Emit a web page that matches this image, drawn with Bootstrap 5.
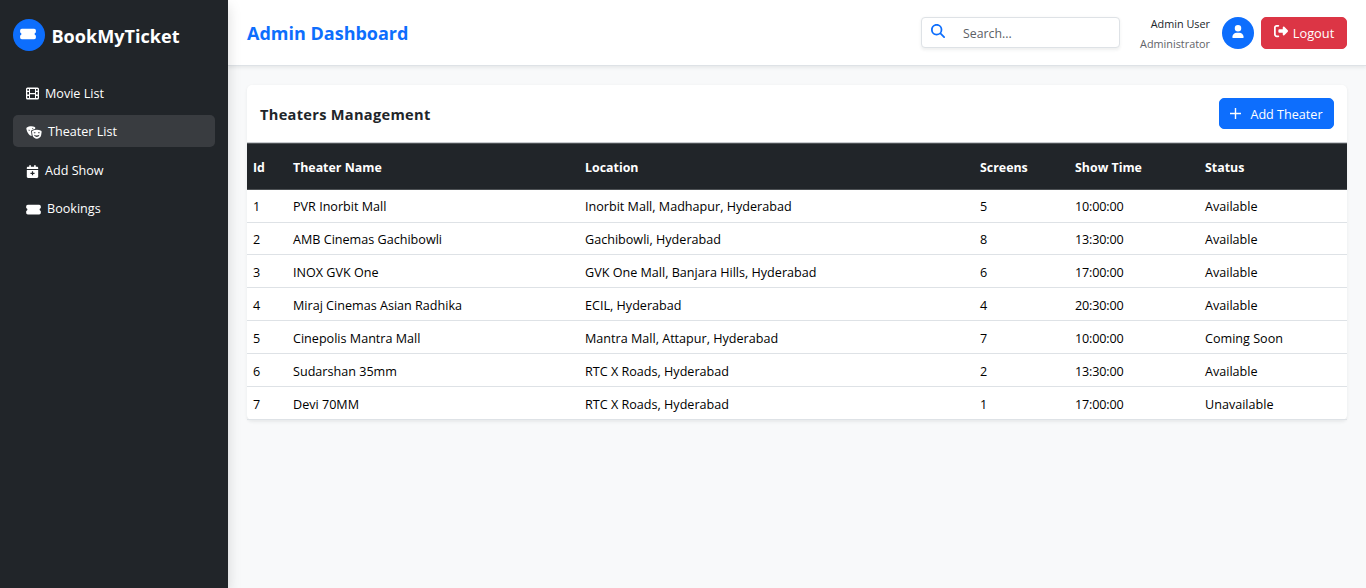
<!DOCTYPE html>
<html lang="en">
<head>
<meta charset="utf-8">
<meta name="viewport" content="width=device-width, initial-scale=1">
<title>Admin Dashboard</title>
<link href="https://cdn.jsdelivr.net/npm/bootstrap@5.3.0/dist/css/bootstrap.min.css" rel="stylesheet">
<style>
html{font-size:12.8px}
body{font-family:"Open Sans","Noto Sans",sans-serif;background:#f8f9fa;height:100vh;overflow:hidden;color:#212529}
svg{fill:currentColor;display:block;flex:none}
.side{width:228px;padding:19px 13px;z-index:3;box-shadow:0 6.4px 12.8px rgba(0,0,0,.15)}
.disc{width:32px;height:32px;border-radius:50%}
.side .disc{padding:0 2px 2px 0}
.brand{font-size:18.1px;line-height:30px;font-weight:700;padding-top:2px}
.side .nav{margin-top:26px;gap:6.3px}
.side .nav-link{height:32px;padding:0 13px;border-radius:5px;color:#fff;gap:6px;font-size:12.6px}
.side .nav-link span{padding-top:3px}
.side .nav-link.active{background:#393c40}
.topbar{height:66px;padding:0 19px;border-bottom:1px solid #dee2e6;z-index:2}
.title{font-size:18px;font-weight:700;line-height:24px}
.search{width:199px;height:31px;border:1px solid #dee2e6;border-radius:4px;padding:0 10px 0 9px;margin-right:20px}
.search svg{margin-bottom:3px}
.search input{border:0;outline:0;width:130px;margin-left:18px;padding:3px 0 0;background:none;font-size:12.3px}
.search input::placeholder{color:#5c6066;opacity:1}
.who{font-size:10.85px;line-height:20px;margin-right:12px;padding-top:2px;color:#212529}
.role{color:#5f6368}
.user-icon{margin-bottom:2px}
.logout{height:32px;width:86px;padding:0;border-radius:5px;margin-left:7px;font-size:12.8px;gap:5px}
.logout span{padding-top:2px}
.add span{padding-top:3px}
.panel{margin:19px;border-radius:5px}
.panel-top{height:58px;padding:0 13px;border-bottom:1px solid #c8cbcf}
.panel-top h2{font-size:14.6px;font-weight:700;margin:2px 0 0;letter-spacing:.3px}
.add{width:115px;height:31px;padding:0;border-radius:5px;font-size:12.6px;gap:9px}
.theaters{table-layout:fixed;font-size:12.6px;border-collapse:separate;border-spacing:0}
.theaters td,.theaters th{padding:1px 6px 0;height:33px;vertical-align:middle;white-space:nowrap;line-height:19px}
.theaters td{border-bottom:1px solid #dee2e6;color:#000}
.theaters td:nth-child(5){letter-spacing:-.15px}
.theaters tbody tr:nth-child(2) td{height:32px;padding-top:2px}
.theaters tbody tr:nth-child(n+3) td{padding-top:3px}
.theaters th{height:47px;padding-top:2px;font-size:12.4px;background:#212529;color:#fff;border-bottom:1px solid #4d5154;border-top:1px solid #4d5154}
</style>
</head>
<body class="d-flex">
<svg class="d-none"><symbol id="ticket" viewBox="0 0 576 512"><path d="M0 128C0 92.7 28.7 64 64 64h448c35.300 0 64 28.700 64 64v64c0 8.800-7.400 15.700-15.700 18.600C541.500 217.100 528 235 528 256s13.500 38.900 32.300 45.400c8.300 2.900 15.700 9.800 15.700 18.600v64c0 35.300-28.700 64-64 64H64c-35.300 0-64-28.700-64-64v-64c0-8.800 7.400-15.700 15.700-18.600C34.500 294.900 48 277 48 256s-13.500-38.900-32.300-45.400C7.400 207.700 0 200.800 0 192z"/></symbol></svg>
<aside class="side bg-dark text-white position-relative flex-shrink-0">
  <div class="d-flex align-items-center">
    <div class="disc bg-primary d-flex align-items-center justify-content-center"><svg width="16" height="14"><use href="#ticket"/></svg></div>
    <span class="brand ms-2">BookMyTicket</span>
  </div>
  <nav class="nav flex-column">
    <a class="nav-link d-flex align-items-center"><svg width="13" height="13" viewBox="0 0 13 13"><path fill-rule="evenodd" d="M1.500.5h10a1.500 1.500 0 0 1 1.500 1.500v9a1.500 1.500 0 0 1-1.500 1.500h-10A1.500 1.500 0 0 1 0 11V2A1.500 1.500 0 0 1 1.500.5zM1.300 2v1.700h1.700V2zM1.300 5v2.600h1.700V5zM1.300 9v2h1.700V9zM10 2v1.700h1.700V2zM10 5v2.600h1.700V5zM10 9v2h1.700V9zM4 2v4h5V2zM4 7.200V11h5V7.200z"/></svg><span>Movie List</span></a>
    <a class="nav-link active d-flex align-items-center"><svg class="mt-1" width="16" height="13" viewBox="0 0 640 512"><path fill-rule="evenodd" d="M35 60C100 10 250-10 350 35c20 10 25 30 20 50l-8 30c-50 8-100 25-140 50-15 10-22 25-20 42l25 190c-40 0-110-50-150-120C30 200 10 110 15 90c3-12 10-22 20-30zM100 150c-5 20 5 35 20 38s30-5 35-22c-15-15-35-20-55-16zM245 75c-5 20 3 32 18 35s28-5 32-20c-15-12-32-18-50-15zM260 190c100-60 240-60 345 0 15 9 22 25 20 42l-20 130c-12 80-110 140-175 140-60 0-155-55-170-140l-20-130c-2-17 5-33 20-42zM310 260c-3 15 5 25 15 27l45-4c8-3 13-13 10-25-20-15-50-12-70 2zM480 260c-3 15 5 25 15 27l45-4c8-3 13-13 10-25-20-15-50-12-70 2zM320 350c50 30 160 30 215-5-10 60-55 90-105 90s-100-30-110-85z"/></svg><span>Theater List</span></a>
    <a class="nav-link d-flex align-items-center"><svg class="mt-1" width="13" height="13" viewBox="-32 0 512 512"><path fill-rule="evenodd" d="M96 32c0-43 64-43 64 0v32h128V32c0-43 64-43 64 0v32h48c26 0 48 22 48 48v48H0v-48c0-26 22-48 48-48h48zM0 192h448v272c0 26-22 48-48 48H48c-26 0-48-22-48-48zM200 248v56h-56v48h56v56h48v-56h56v-48h-56v-56z"/></svg><span>Add Show</span></a>
    <a class="nav-link d-flex align-items-center"><svg class="mt-1" width="15" height="13"><use href="#ticket"/></svg><span>Bookings</span></a>
  </nav>
</aside>
<div class="flex-grow-1">
  <header class="topbar bg-white shadow-sm d-flex align-items-center position-relative">
    <h1 class="title text-primary m-0 me-auto">Admin Dashboard</h1>
    <div class="search d-flex align-items-center shadow-sm bg-white">
      <svg class="text-primary" width="14" height="14" viewBox="0 0 512 512"><path d="M416 208c0 46-15 88-40 123l127 126c12 13 12 33 0 46-13 12-33 12-46 0L331 376c-35 25-77 40-123 40C93 416 0 323 0 208S93 0 208 0s208 93 208 208zM208 352a144 144 0 1 0 0-288 144 144 0 0 0 0 288z"/></svg>
      <input placeholder="Search...">
    </div>
    <div class="who text-end"><div>Admin User</div><div class="role">Administrator</div></div>
    <div class="disc bg-primary text-white d-flex align-items-center justify-content-center"><svg class="user-icon" width="12" height="13" viewBox="0 0 448 512"><path d="M224 256a128 128 0 1 0 0-256 128 128 0 0 0 0 256zm-46 48C80 304 0 384 0 482c0 17 13 30 30 30h388c17 0 30-13 30-30 0-98-80-178-178-178z"/></svg></div>
    <button class="logout btn btn-danger d-flex align-items-center justify-content-center"><svg class="mb-1" width="14" height="14" viewBox="0 0 512 512"><path d="M377 105l126 126c14 14 14 36 0 50L377 407c-20 20-57 8-57-23v-64H192c-18 0-32-14-32-32v-64c0-18 14-32 32-32h128v-64c0-31 37-43 57-23zM160 96H96c-18 0-32 14-32 32v256c0 18 14 32 32 32h64c43 0 43 64 0 64H96c-53 0-96-43-96-96V128c0-53 43-96 96-96h64c43 0 43 64 0 64z"/></svg><span>Logout</span></button>
  </header>
  <main class="panel bg-white shadow-sm">
    <div class="panel-top d-flex align-items-center justify-content-between">
      <h2>Theaters Management</h2>
      <button class="add btn btn-primary d-flex align-items-center justify-content-center"><svg width="11" height="11" viewBox="0 0 11 11"><path d="M4.800 0h1.400v4.800H11v1.400H6.200V11H4.800V6.200H0V4.800h4.800z"/></svg><span>Add Theater</span></button>
    </div>
    <table class="theaters w-100">
      <colgroup><col style="width:40px"><col style="width:292px"><col style="width:395px"><col style="width:95px"><col style="width:130px"><col></colgroup>
      <thead><tr><th>Id</th><th>Theater Name</th><th>Location</th><th>Screens</th><th>Show Time</th><th>Status</th></tr></thead>
      <tbody>
        <tr><td>1</td><td>PVR Inorbit Mall</td><td>Inorbit Mall, Madhapur, Hyderabad</td><td>5</td><td>10:00:00</td><td>Available</td></tr>
        <tr><td>2</td><td>AMB Cinemas Gachibowli</td><td>Gachibowli, Hyderabad</td><td>8</td><td>13:30:00</td><td>Available</td></tr>
        <tr><td>3</td><td>INOX GVK One</td><td>GVK One Mall, Banjara Hills, Hyderabad</td><td>6</td><td>17:00:00</td><td>Available</td></tr>
        <tr><td>4</td><td>Miraj Cinemas Asian Radhika</td><td>ECIL, Hyderabad</td><td>4</td><td>20:30:00</td><td>Available</td></tr>
        <tr><td>5</td><td>Cinepolis Mantra Mall</td><td>Mantra Mall, Attapur, Hyderabad</td><td>7</td><td>10:00:00</td><td>Coming Soon</td></tr>
        <tr><td>6</td><td>Sudarshan 35mm</td><td>RTC X Roads, Hyderabad</td><td>2</td><td>13:30:00</td><td>Available</td></tr>
        <tr><td>7</td><td>Devi 70MM</td><td>RTC X Roads, Hyderabad</td><td>1</td><td>17:00:00</td><td>Unavailable</td></tr>
      </tbody>
    </table>
  </main>
</div>
<script src="https://cdn.jsdelivr.net/npm/bootstrap@5.3.0/dist/js/bootstrap.bundle.min.js"></script>
</body>
</html>
